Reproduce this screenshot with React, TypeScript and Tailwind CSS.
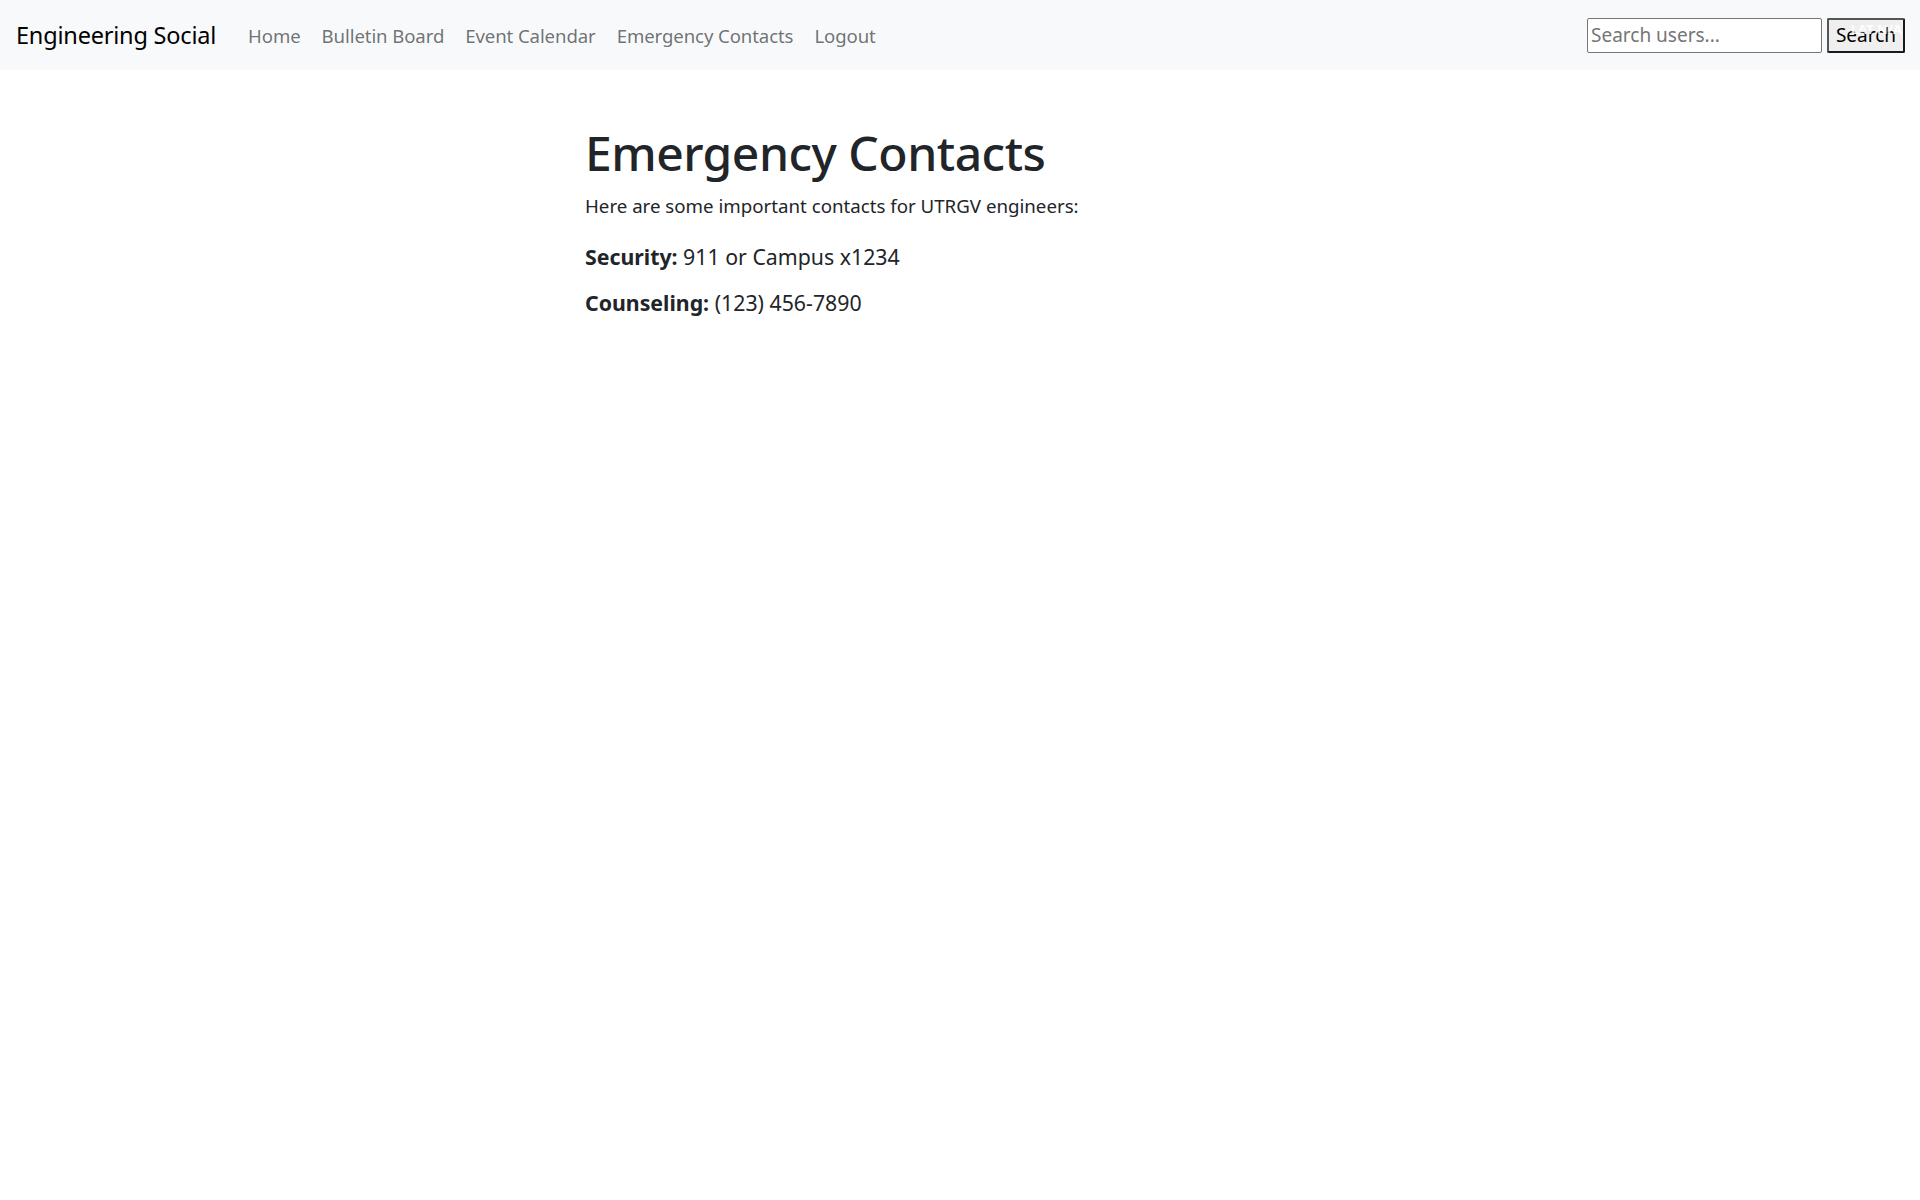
const NAV_LINKS = ["Home", "Bulletin Board", "Event Calendar", "Emergency Contacts", "Logout"];

const CONTACTS = [
  { label: "Security:", value: "911 or Campus x1234" },
  { label: "Counseling:", value: "(123) 456-7890" },
];

const FONT = "font-['Noto_Sans','Open_Sans',sans-serif]";

export default function App() {
  return (
    <div className={`min-h-screen bg-white text-[#212529] ${FONT}`}>
      <nav className="h-[70px] bg-[#f8f9fa] flex items-center pl-4 pr-[15px]">
        <a href="#" className="text-[23.5px] text-black tracking-[-0.2px] mr-[32px] pt-[2px]">
          Engineering Social
        </a>
        <ul className="flex items-center gap-[21px] text-[18.6px] text-[#212529]/65 tracking-[-0.1px] pt-[2px]">
          {NAV_LINKS.map((l) => (
            <li key={l}>
              <a href="#">{l}</a>
            </li>
          ))}
        </ul>
        <form className="ml-auto flex items-center gap-[5px]" onSubmit={(e) => e.preventDefault()}>
          <input
            placeholder="Search users..."
            className="w-[235px] h-[35px] bg-white border border-[#767676] rounded-[2px] px-[3px] text-[19px] text-black placeholder:text-[#757575] outline-none"
          />
          <div className="relative">
            <button
              type="submit"
              className="w-[78px] h-[35px] bg-[#efefef] border-2 border-[#1a1a1a] border-t-[#555] border-l-[#555] rounded-[2px] text-[19px] text-black leading-none"
            >
              Search
            </button>
            <span className="absolute right-[3px] top-[5px] text-[13px] font-bold leading-none text-white/90 pointer-events-none">
              LAT N/A
            </span>
          </div>
        </form>
      </nav>

      <main className="pl-[585px] pt-[53px]">
        <h1 className="text-[48px] leading-[60px] font-medium tracking-[-0.5px] mb-[8px]">
          Emergency Contacts
        </h1>
        <p className="text-[18.7px] leading-[30px] mb-[18px]">
          Here are some important contacts for UTRGV engineers:
        </p>
        <div className="flex flex-col gap-[10px]">
          {CONTACTS.map((c) => (
            <p key={c.label} className="text-[21.3px] leading-[36px]">
              <strong className="font-bold">{c.label}</strong> {c.value}
            </p>
          ))}
        </div>
      </main>
    </div>
  );
}
